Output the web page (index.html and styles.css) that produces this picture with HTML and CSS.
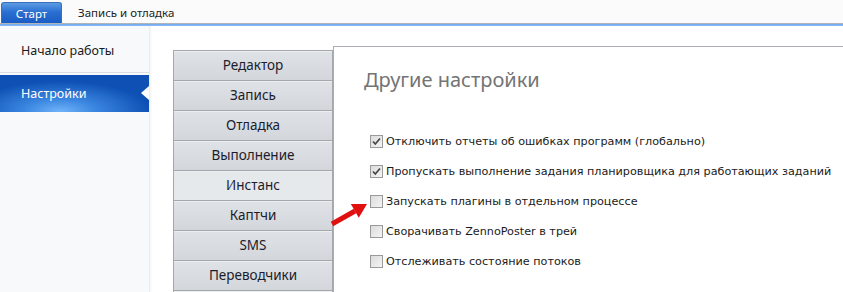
FILE: index.html
```html
<!DOCTYPE html>
<html lang="ru">
<head>
<meta charset="utf-8">
<link rel="stylesheet" href="styles.css">
</head>
<body>
<div class="app">
  <div class="topbar">
    <div class="tab tab-active">Старт</div>
    <div class="tab">Запись и отладка</div>
  </div>
  <div class="ribbon-line"></div>
  <div class="body">
    <nav class="sidebar">
      <div class="side-item">Начало работы</div>
      <div class="side-sep"></div>
      <div class="side-item side-active">Настройки<span class="notch"></span></div>
    </nav>
    <main class="main">
      <div class="cats">
        <div class="cat">Редактор</div>
        <div class="cat">Запись</div>
        <div class="cat">Отладка</div>
        <div class="cat">Выполнение</div>
        <div class="cat cat-active">Инстанс</div>
        <div class="cat">Каптчи</div>
        <div class="cat">SMS</div>
        <div class="cat">Переводчики</div>
        <div class="cat"></div>
      </div>
      <section class="panel">
        <h1 class="title">Другие настройки</h1>
        <div class="opts">
          <div class="opt"><span class="cb cb-on"><svg viewBox="0 0 13 13" width="13" height="13"><path d="M3 6.5 L5.3 9 L10 3.5" fill="none" stroke="#4a4a4a" stroke-width="1.8"/></svg></span>Отключить отчеты об ошибках программ (глобально)</div>
          <div class="opt"><span class="cb cb-on"><svg viewBox="0 0 13 13" width="13" height="13"><path d="M3 6.5 L5.3 9 L10 3.5" fill="none" stroke="#4a4a4a" stroke-width="1.8"/></svg></span>Пропускать выполнение задания планировщика для работающих заданий</div>
          <div class="opt"><span class="cb"></span>Запускать плагины в отдельном процессе</div>
          <div class="opt"><span class="cb"></span>Сворачивать ZennoPoster в трей</div>
          <div class="opt"><span class="cb"></span>Отслеживать состояние потоков</div>
        </div>
        <svg class="arrow" width="40" height="30" viewBox="0 0 40 30"><path d="M2 25 L25 12" stroke="#e01010" stroke-width="5" stroke-linecap="butt"/><path d="M37 5 L20.8 5 L28.8 18.8 Z" fill="#e01010"/></svg>
      </section>
    </main>
  </div>
</div>
</body>
</html>
```
FILE: styles.css
```css
* { box-sizing: border-box; }
html, body { margin: 0; padding: 0; }
body {
  width: 843px; height: 292px; overflow: hidden;
  background: #fff;
  font-family: "DejaVu Sans", sans-serif;
  color: #1e1e1e;
}
.app { display: flex; flex-direction: column; height: 292px; overflow: hidden; }
.topbar {
  flex: none;
  height: 23px; display: flex; align-items: flex-end;
  background: #fbfbfb; padding-left: 1px;
}
.tab {
  height: 21px; font-family: "Noto Sans", sans-serif; font-size: 11.5px;
  line-height: 21px; padding: 0 16px; color: #222;
}
.tab-active {
  width: 61px; padding: 0; text-align: center;
  color: #fff; border-radius: 3px 3px 0 0;
  background: linear-gradient(#5c9be3, #2a6fd0 45%, #1a5cc4);
  border: 1px solid #3a6fb8; border-bottom: none;
}
.ribbon-line {
  flex: none;
  height: 3px;
  background: linear-gradient(#b0b4b8 0 1px, #6ea6ee 1px, #8cbcf4);
}
.body { flex: 1; min-height: 0; display: flex; overflow: hidden; }
.sidebar {
  width: 150px; flex: none; background: #f8f9fa;
  border-right: 1px solid #eceef0;
  box-shadow: 1px 0 2px rgba(0,0,0,0.05);
  padding-top: 12px;
}
.side-item {
  height: 34px; line-height: 26px; padding-left: 21px;
  font-family: "Noto Sans", sans-serif; font-size: 12.5px; color: #1a1a1a;
  position: relative;
}
.side-sep { height: 1px; background: #dcdfe2; box-shadow: 0 1px 0 #fff; margin-bottom: 2px; }
.side-active {
  height: 37px; line-height: 37px; color: #fff;
  background: radial-gradient(ellipse 90px 30px at 60px 36px, #6fb2f8 0%, #3a86e0 40%, #0e50b4 100%);
}
.notch {
  position: absolute; right: 0; top: 11px;
  width: 0; height: 0;
  border-top: 7px solid transparent; border-bottom: 7px solid transparent;
  border-right: 8px solid #fff;
}
.main { flex: 1; display: flex; align-items: flex-start; padding-top: 20px; }
.cats {
  margin-left: 23px; margin-top: 4px; width: 160px; flex: none;
  display: flex; flex-direction: column;
}
.cat {
  height: 31px; flex: none; text-align: center; line-height: 29px;
  font-family: "Noto Sans", sans-serif; font-size: 13.5px; color: #1c1c2c;
  background: linear-gradient(#dfe2e6, #d3d6da);
  border: 1px solid #a4a8ad;
  margin-bottom: -1px;
  box-shadow: inset 0 1px 0 #eceef0;
}
.cat-active { background: #e6e9ec; }
.panel {
  flex: 1; height: 250px; position: relative;
  border-top: 1px solid #a9adb2; border-left: 1px solid #a9adb2;
  padding: 19px 0 0 30px;
}
.title {
  margin: 0; font-family: "Noto Sans", sans-serif; font-weight: normal;
  font-size: 20px; color: #747474; line-height: 28px;
}
.opts { margin-top: 32px; display: flex; flex-direction: column; }
.opt {
  height: 30px; display: flex; align-items: center;
  font-size: 11.2px; color: #1a1a1a; padding-left: 6px;
}
.cb {
  width: 13px; height: 13px; margin-right: 3px;
  border: 1px solid #9a9a9a; background: linear-gradient(135deg, #dcdcdc, #f4f4f4);
  display: inline-flex; flex: none;
}
.cb svg { margin: -1px; }
.arrow { position: absolute; left: -4px; top: 152px; }
```
